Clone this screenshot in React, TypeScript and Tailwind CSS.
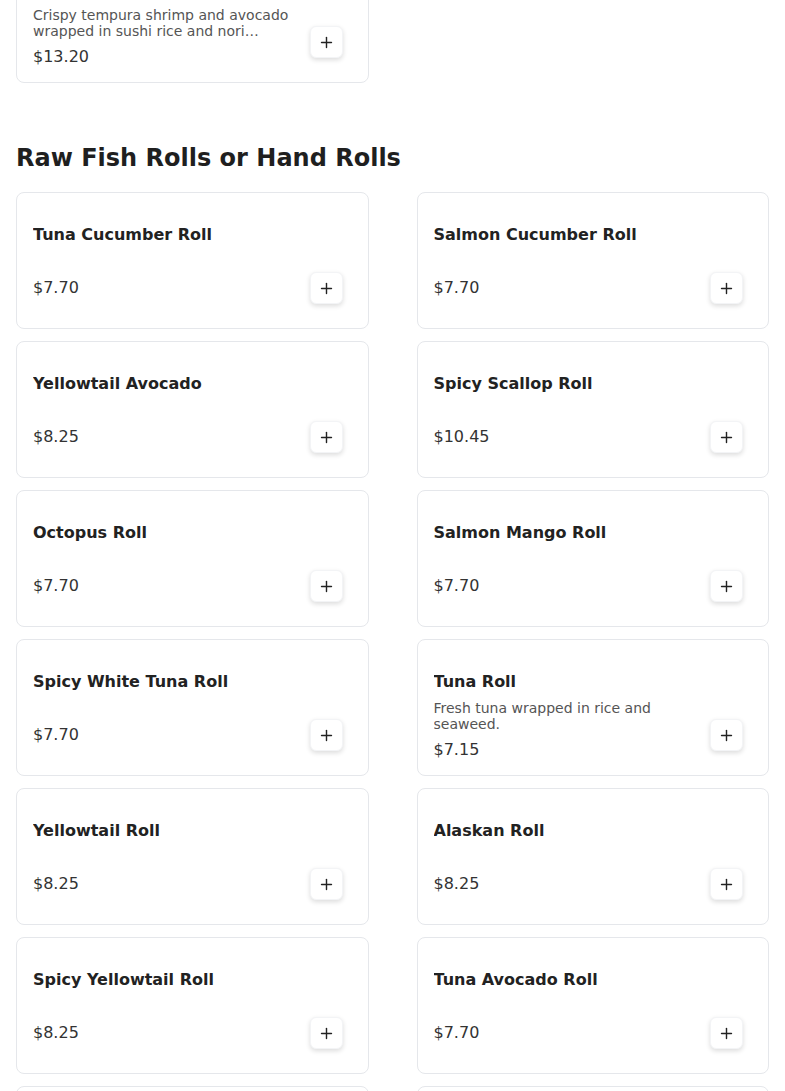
import { Plus } from 'lucide-react';

interface MenuItem {
  name: string;
  price: string;
  description?: string;
}

const rawFish: MenuItem[] = [
  { name: 'Tuna Cucumber Roll', price: '$7.70' },
  { name: 'Salmon Cucumber Roll', price: '$7.70' },
  { name: 'Yellowtail Avocado', price: '$8.25' },
  { name: 'Spicy Scallop Roll', price: '$10.45' },
  { name: 'Octopus Roll', price: '$7.70' },
  { name: 'Salmon Mango Roll', price: '$7.70' },
  { name: 'Spicy White Tuna Roll', price: '$7.70' },
  { name: 'Tuna Roll', price: '$7.15', description: 'Fresh tuna wrapped in rice and seaweed.' },
  { name: 'Yellowtail Roll', price: '$8.25' },
  { name: 'Alaskan Roll', price: '$8.25' },
  { name: 'Spicy Yellowtail Roll', price: '$8.25' },
  { name: 'Tuna Avocado Roll', price: '$7.70' },
  { name: 'Salmon Roll', price: '$7.15' },
  { name: 'Spicy Tuna Roll', price: '$7.70' },
];

function ItemCard({ item }: { item: MenuItem }) {
  return (
    <div className="flex h-[137px] items-end rounded-lg border border-gray-200 bg-white pl-4">
      <div className="flex h-full min-w-0 flex-1 flex-col pt-[30px]">
        <h3 className="truncate text-base font-bold leading-6 text-[#222]">{item.name}</h3>
        {item.description ? (
          <p className="mt-1.5 line-clamp-2 pr-1 text-sm leading-4 text-[#555]">{item.description}</p>
        ) : (
          <div className="mt-1.5 h-[17px]" />
        )}
        <p className="mt-1.5 text-base leading-6 text-[#333]">{item.price}</p>
      </div>
      <button
        type="button"
        className="mb-6 mr-[25px] flex h-8 w-[33px] shrink-0 items-center justify-center rounded-md border border-gray-100 bg-white text-[#222] shadow-[0_2px_5px_rgba(0,0,0,0.14)]"
      >
        <Plus size={17} strokeWidth={2} />
      </button>
    </div>
  );
}

export default function App() {
  return (
    <div
      className="min-h-screen overflow-hidden bg-white px-4"
      style={{ fontFamily: '"DejaVu Sans", Verdana, sans-serif' }}
    >
      {/* Previous section, scrolled mostly out of view */}
      <div className="-mt-[54px] grid grid-cols-2 gap-x-12 gap-y-3">
        <ItemCard
          item={{
            name: 'Shrimp Tempura Roll',
            price: '$13.20',
            description: 'Crispy tempura shrimp and avocado wrapped in sushi rice and nori seaweed, topped with eel sauce.',
          }}
        />
      </div>

      <section className="mt-[57px]">
        <h2 className="mb-4 text-2xl font-bold leading-9 text-[#1f1f1f]">Raw Fish Rolls or Hand Rolls</h2>
        <div className="grid grid-cols-2 gap-x-12 gap-y-3">
          {rawFish.map((item) => (
            <ItemCard key={item.name} item={item} />
          ))}
        </div>
      </section>
    </div>
  );
}
